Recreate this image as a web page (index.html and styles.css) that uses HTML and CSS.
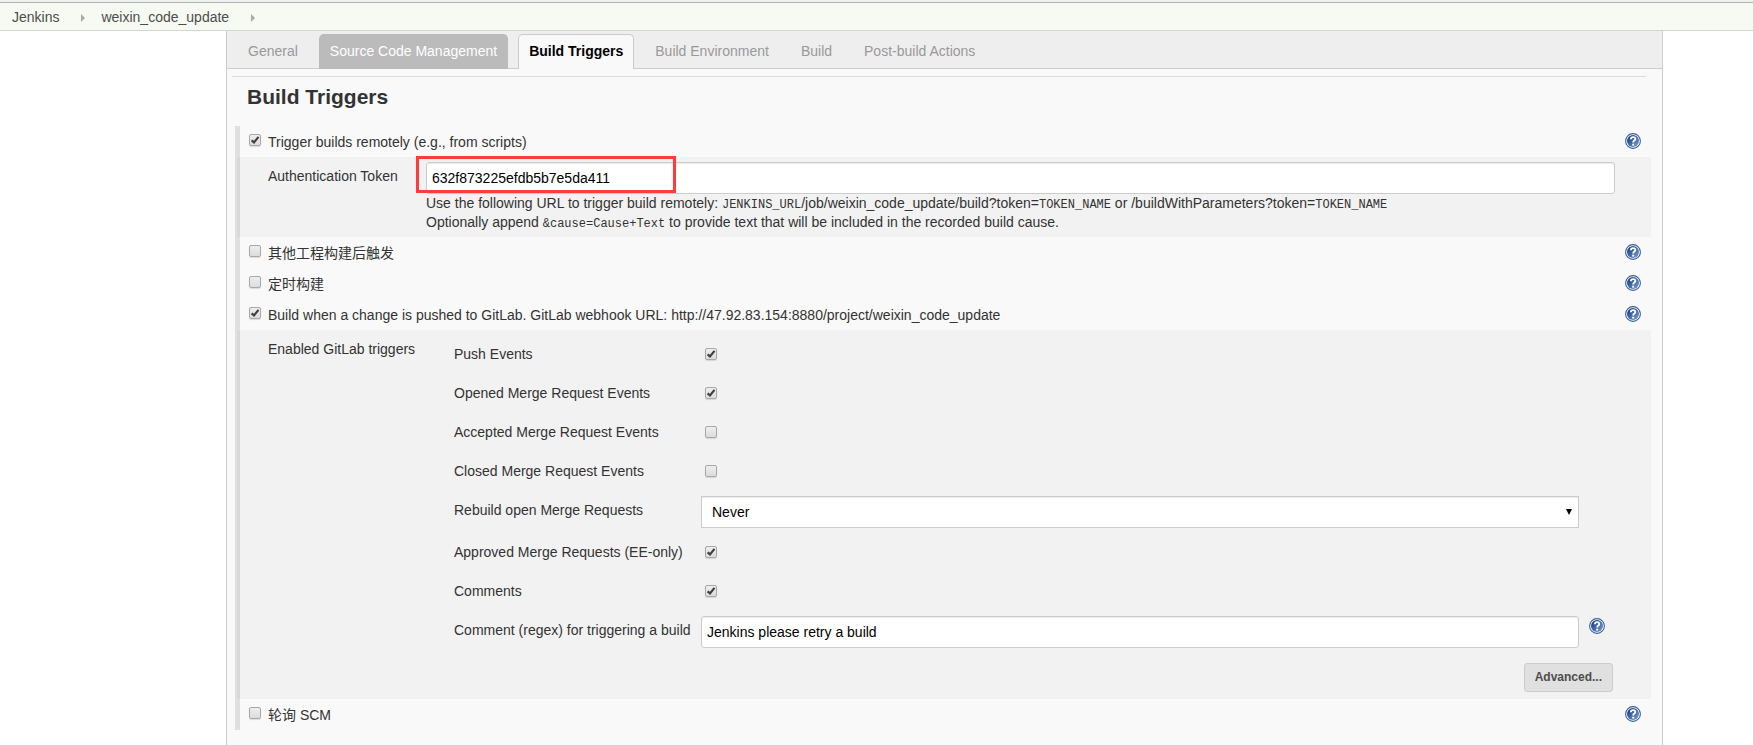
FILE: index.html
```
<!DOCTYPE html>
<html lang="en">
<head>
<meta charset="utf-8">
<title>weixin_code_update Config [Jenkins]</title>
<link rel="stylesheet" href="styles.css">
</head>
<body>
<svg class="defs" aria-hidden="true">
  <defs>
    <linearGradient id="disc" x1="0" y1="0" x2="1" y2="1">
      <stop offset="0.2" stop-color="#1f4a8c"/>
      <stop offset="1" stop-color="#7f9fd0"/>
    </linearGradient>
    <symbol id="help" viewBox="0 0 16 16">
      <circle cx="8" cy="8" r="7.4" fill="#fff" stroke="#3a609c" stroke-width="1.1"/>
      <circle cx="8" cy="8" r="6" fill="url(#disc)"/>
      <path d="M5.9 6.2C5.9 3.4 10.3 3.5 10.3 5.9C10.3 7.6 8.2 7.6 8.2 9.5" fill="none" stroke="#fff" stroke-width="1.9"/>
      <rect x="7.2" y="10.7" width="2" height="1.9" fill="#fff"/>
    </symbol>
  </defs>
</svg>

<nav class="breadcrumbs" aria-label="Breadcrumb">
  <a href="#">Jenkins</a>
  <span class="crumb-arrow"></span>
  <a href="#">weixin_code_update</a>
  <span class="crumb-arrow"></span>
</nav>

<main class="panel">
  <div class="tabs" role="tablist">
    <button class="tab" role="tab">General</button>
    <button class="tab tab-hover" role="tab">Source Code Management</button>
    <button class="tab tab-active" role="tab" aria-selected="true">Build Triggers</button>
    <button class="tab" role="tab">Build Environment</button>
    <button class="tab" role="tab">Build</button>
    <button class="tab" role="tab">Post-build Actions</button>
  </div>

  <form class="config">
    <hr class="rule">
    <h1 class="title">Build Triggers</h1>

    <div class="triggers">
      <div class="trigger">
        <input class="check" type="checkbox" id="remote" checked>
        <label class="grow" for="remote">Trigger builds remotely (e.g., from scripts)</label>
        <a class="help" href="#" aria-label="Help"><svg><use href="#help"/></svg></a>
      </div>
      <div class="pane pane-token">
        <label class="pane-label" for="token">Authentication Token</label>
        <div class="token">
          <input class="text" type="text" id="token" value="632f873225efdb5b7e5da411">
          <span class="highlight"></span>
          <div>Use the following URL to trigger build remotely: <code>JENKINS_URL</code>/job/weixin_code_update/build?token=<code>TOKEN_NAME</code> or /buildWithParameters?token=<code>TOKEN_NAME</code></div>
          <div>Optionally append <code>&amp;cause=Cause+Text</code> to provide text that will be included in the recorded build cause.</div>
        </div>
      </div>

      <div class="trigger">
        <input class="check" type="checkbox" id="after">
        <label class="grow" for="after" lang="zh">其他工程构建后触发</label>
        <a class="help" href="#" aria-label="Help"><svg><use href="#help"/></svg></a>
      </div>
      <div class="trigger">
        <input class="check" type="checkbox" id="timer">
        <label class="grow" for="timer" lang="zh">定时构建</label>
        <a class="help" href="#" aria-label="Help"><svg><use href="#help"/></svg></a>
      </div>
      <div class="trigger">
        <input class="check" type="checkbox" id="gitlab" checked>
        <label class="grow" for="gitlab">Build when a change is pushed to GitLab. GitLab webhook URL: http://47.92.83.154:8880/project/weixin_code_update</label>
        <a class="help" href="#" aria-label="Help"><svg><use href="#help"/></svg></a>
      </div>
      <div class="pane pane-gitlab">
        <div class="pane-label">Enabled GitLab triggers</div>
        <div class="options">
          <div class="option"><label for="push">Push Events</label><input class="check" type="checkbox" id="push" checked></div>
          <div class="option"><label for="opened">Opened Merge Request Events</label><input class="check" type="checkbox" id="opened" checked></div>
          <div class="option"><label for="accepted">Accepted Merge Request Events</label><input class="check" type="checkbox" id="accepted"></div>
          <div class="option"><label for="closed">Closed Merge Request Events</label><input class="check" type="checkbox" id="closed"></div>
          <div class="option option-field"><label for="rebuild">Rebuild open Merge Requests</label><select class="select" id="rebuild"><option>Never</option></select></div>
          <div class="option"><label for="approved">Approved Merge Requests (EE-only)</label><input class="check" type="checkbox" id="approved" checked></div>
          <div class="option"><label for="comments">Comments</label><input class="check" type="checkbox" id="comments" checked></div>
          <div class="option option-field"><label for="regex">Comment (regex) for triggering a build</label><input class="text" type="text" id="regex" value="Jenkins please retry a build"><a class="help" href="#" aria-label="Help"><svg><use href="#help"/></svg></a></div>
          <div class="actions"><button class="button" type="button">Advanced...</button></div>
        </div>
      </div>

      <div class="trigger">
        <input class="check" type="checkbox" id="poll">
        <label class="grow" for="poll" lang="zh">轮询 SCM</label>
        <a class="help" href="#" aria-label="Help"><svg><use href="#help"/></svg></a>
      </div>
    </div>
  </form>
</main>
</body>
</html>
```
FILE: styles.css
```
* {
  box-sizing: border-box;
}

body {
  display: flex;
  flex-direction: column;
  min-height: 100vh;
  margin: 0;
  border-top: 2px solid #f0f0f0;
  background: #fff;
  color: #333;
  font: 14px/19px "Liberation Sans", "Noto Sans CJK SC", sans-serif;
}

.defs {
  position: absolute;
  width: 0;
  height: 0;
}

.breadcrumbs {
  display: flex;
  align-items: center;
  padding: 5px 12px 3px;
  border-top: 1px solid #b3b3b8;
  border-bottom: 1px solid #d3d7cf;
  background: #f6faf2;
}

.breadcrumbs a {
  color: #4d4d4d;
  text-decoration: none;
}

.crumb-arrow {
  margin: 0 16px 0 22px;
  border: solid transparent;
  border-width: 4px 0 4px 4px;
  border-left-color: #aaa;
}

.panel {
  flex: 1;
  margin: 0 90px 0 226px;
  border: solid #ccc;
  border-width: 0 1px;
  background: #f9f9f9;
}

.tabs {
  display: flex;
  gap: 10px;
  padding: 3px 10px 0;
  border-bottom: 1px solid #ccc;
  background: #eee;
}

.tab {
  margin-bottom: -1px;
  padding: 7px 10px 8px;
  border: 1px solid transparent;
  border-bottom: 0;
  border-radius: 5px 5px 0 0;
  background: none;
  color: #999;
  font: inherit;
}

.tab-hover {
  border-color: #bbb;
  background: #bbb;
  color: #fff;
}

.tab-active {
  border-color: #ccc;
  background: #f9f9f9;
  color: #000;
  font-weight: bold;
}

.config {
  padding: 7px 11px 15px 8px;
}

.rule {
  height: 1px;
  margin: 0 5px 0 -3px;
  border: 0;
  background: #ddd;
}

.title {
  margin: 8px 12px 17px;
  font-size: 21px;
  line-height: 24px;
}

.triggers {
  background: linear-gradient(#e0e0e0, #e0e0e0) left / 5px 100% no-repeat;
}

.trigger {
  display: flex;
  align-items: flex-start;
  padding: 7px 10px 5px 14px;
}

.grow {
  flex: 1;
}

.check {
  appearance: none;
  flex: none;
  width: 12px;
  height: 12px;
  margin: 1px 7px 0 0;
  border: 1px solid #a8a8a8;
  border-radius: 2px;
  background: linear-gradient(#eee, #dcdcdc);
  box-shadow: 0 1px 1px rgba(0, 0, 0, .12);
}

.check:checked {
  background: url("data:image/svg+xml,%3Csvg xmlns='http://www.w3.org/2000/svg' viewBox='0 0 10 10'%3E%3Cpath d='M1.6 5.3L4 7.4L8.5 1.9' fill='none' stroke='%23404040' stroke-width='2.2'/%3E%3C/svg%3E") center / 10px 10px no-repeat, linear-gradient(#eee, #dcdcdc);
}

.help {
  display: block;
  flex: none;
  width: 16px;
  height: 16px;
}

.help svg {
  display: block;
  width: 16px;
  height: 16px;
}

.pane {
  display: grid;
  margin-left: 2px;
  padding: 5px 36px 5px 31px;
  background: rgba(0, 0, 0, .027);
}

.pane-token {
  grid-template-columns: 158px 1fr;
}

.pane-gitlab {
  grid-template-columns: 186px 1fr;
}

.pane-label {
  padding-top: 5px;
}

.token {
  position: relative;
}

.highlight {
  position: absolute;
  top: -6px;
  left: -10px;
  width: 260px;
  height: 37px;
  border: 3px solid #ff3b3b;
  pointer-events: none;
}

code {
  font: 12px/1 "Liberation Mono", monospace;
}

.text,
.select {
  display: block;
  width: 100%;
  height: 32px;
  margin: 0;
  padding: 0 5px;
  border: 1px solid #ccc;
  border-radius: 3px;
  background: #fff;
  box-shadow: inset 0 1px 1px rgba(0, 0, 0, .075);
  color: #000;
  font: inherit;
}

.select {
  appearance: none;
  padding: 0 10px;
  border-radius: 0;
  background: #fff url("data:image/svg+xml,%3Csvg xmlns='http://www.w3.org/2000/svg' viewBox='0 0 6 6'%3E%3Cpath d='M0 0H6L3 6Z'/%3E%3C/svg%3E") right 6px center / 6px 6px no-repeat;
}

.option {
  display: grid;
  grid-template-columns: 247px 1fr 26px;
  padding: 10px 10px 10px 0;
}

.option .check {
  margin: 3px 0 0 4px;
}

.option-field {
  padding-top: 5px;
  padding-bottom: 5px;
}

.option-field label {
  padding-top: 5px;
}

.option .help {
  margin: 2px 0 0 10px;
}

.actions {
  display: flex;
  justify-content: flex-end;
  padding: 10px 2px 2px;
}

.button {
  padding: 4px 10px;
  border: 1px solid #ccc;
  border-radius: 3px;
  background: #e0e0e0;
  color: #4d4d4d;
  font: bold 12px/19px "Liberation Sans", sans-serif;
}
```
